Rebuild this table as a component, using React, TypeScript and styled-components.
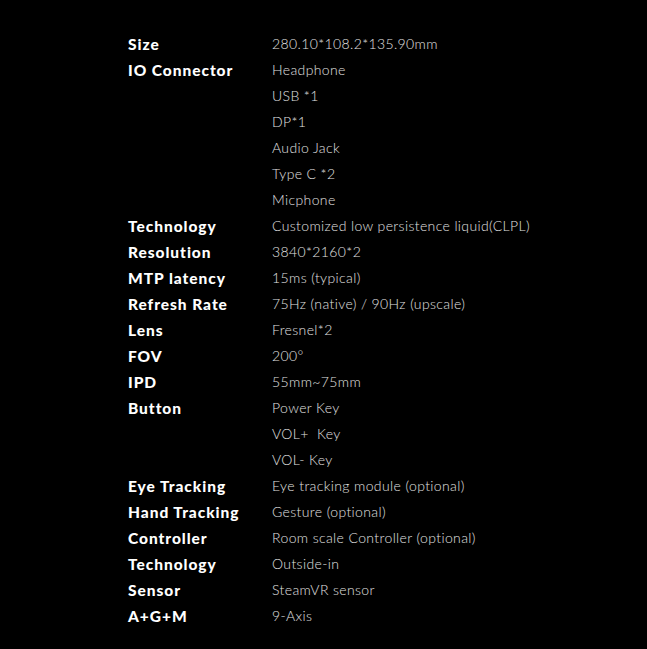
import styled, { createGlobalStyle } from "styled-components";

const GlobalStyle = createGlobalStyle`
  html, body {
    margin: 0;
    padding: 0;
    background: #000;
  }
`;

const Page = styled.div`
  width: 647px;
  height: 649px;
  background: #000;
  padding: 31px 0 0 128px;
  box-sizing: border-box;
`;

const SpecList = styled.div`
  display: grid;
  grid-template-columns: 144px auto;
  grid-auto-rows: 26px;
`;

const Label = styled.div`
  font-family: Lato, "Noto Sans", sans-serif;
  font-weight: 900;
  font-size: 15.5px;
  letter-spacing: 0.95px;
  color: #fff;
  display: flex;
  align-items: center;
`;

const Value = styled.div`
  font-family: Lato, "Noto Sans", sans-serif;
  font-weight: 300;
  font-size: 14px;
  letter-spacing: 0.38px;
  color: #e0e0e0;
  white-space: pre;
  display: flex;
  align-items: center;
  padding-bottom: 2px;
`;

const specs: [string, string[]][] = [
  ["Size", ["280.10*108.2*135.90mm"]],
  ["IO Connector", ["Headphone", "USB *1", "DP*1", "Audio Jack", "Type C *2", "Micphone"]],
  ["Technology", ["Customized low persistence liquid(CLPL)"]],
  ["Resolution", ["3840*2160*2"]],
  ["MTP latency", ["15ms (typical)"]],
  ["Refresh Rate", ["75Hz (native) / 90Hz (upscale)"]],
  ["Lens", ["Fresnel*2"]],
  ["FOV", ["200°"]],
  ["IPD", ["55mm~75mm"]],
  ["Button", ["Power Key", "VOL+  Key", "VOL- Key"]],
  ["Eye Tracking", ["Eye tracking module (optional)"]],
  ["Hand Tracking", ["Gesture (optional)"]],
  ["Controller", ["Room scale Controller (optional)"]],
  ["Technology", ["Outside-in"]],
  ["Sensor", ["SteamVR sensor"]],
  ["A+G+M", ["9-Axis"]],
];

export default function App() {
  return (
    <>
      <GlobalStyle />
      <Page>
        <SpecList>
          {specs.flatMap(([label, values], i) =>
            values.map((v, j) => [
              <Label key={`l${i}-${j}`}>{j === 0 ? label : ""}</Label>,
              <Value key={`v${i}-${j}`}>{v}</Value>,
            ])
          )}
        </SpecList>
      </Page>
    </>
  );
}
